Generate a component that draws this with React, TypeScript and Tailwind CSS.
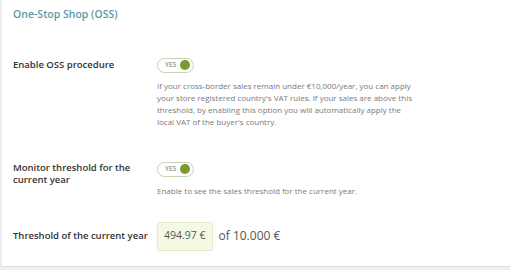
import type React from "react"

const Toggle: React.FC = () => (
  <div className="flex h-[15px] w-[37px] items-center justify-between rounded-full border border-[#c9d3b4] bg-white pl-[7px] pr-[3px]">
    <span className="text-[6.5px] font-semibold tracking-wide text-[#8a8f80]">YES</span>
    <span className="h-[10px] w-[10px] rounded-full bg-[#7b9a2c]" />
  </div>
)

export default function App() {
  return (
    <div
      className="h-[270px] w-[510px] overflow-hidden bg-[#f0f0f0]"
      style={{ fontFamily: '"Open Sans", "Noto Sans", sans-serif' }}
    >
      <div className="h-[267px] border-b border-l-2 border-b-[#dcdcdc] border-l-[#ececec] bg-white pl-[11px]">
        {/* Section title */}
        <h3 className="pt-[7px] text-[10.5px] font-semibold text-[#5a9aa8]">One-Stop Shop (OSS)</h3>

        {/* Enable OSS */}
        <div className="mt-[35px] flex">
          <div className="w-[144px] text-[9.5px] font-semibold text-[#333]">Enable OSS procedure</div>
          <div>
            <Toggle />
            <p className="mt-[7px] w-[258px] text-[8px] leading-[12px] text-[#7a7a7a]">
              If your cross-border sales remain under €10,000/year, you can apply your store registered country's VAT
              rules. If your sales are above this threshold, by enabling this option you will automatically apply the
              local VAT of the buyer's country.
            </p>
          </div>
        </div>

        {/* Monitor threshold */}
        <div className="mt-[33px] flex">
          <div className="w-[144px] pr-[24px] pt-[1px] text-[9.5px] font-semibold leading-[12px] text-[#333]">
            Monitor threshold for the current year
          </div>
          <div className="pt-[1px]">
            <Toggle />
            <p className="mt-[8px] text-[8px] leading-[12px] text-[#7a7a7a]">
              Enable to see the sales threshold for the current year.
            </p>
          </div>
        </div>

        {/* Threshold */}
        <div className="mt-[25px] flex items-center">
          <div className="w-[144px] text-[9.5px] font-semibold text-[#333]">Threshold of the current year</div>
          <div className="flex items-center gap-[6px]">
            <div className="flex h-[29px] items-center rounded-[2px] border border-[#e3ebcb] bg-[#f4f9e3] px-[6px] text-[10.5px] text-[#555]">
              494.97 €
            </div>
            <span className="text-[12px] text-[#555]">of 10.000 €</span>
          </div>
        </div>
      </div>
    </div>
  )
}
